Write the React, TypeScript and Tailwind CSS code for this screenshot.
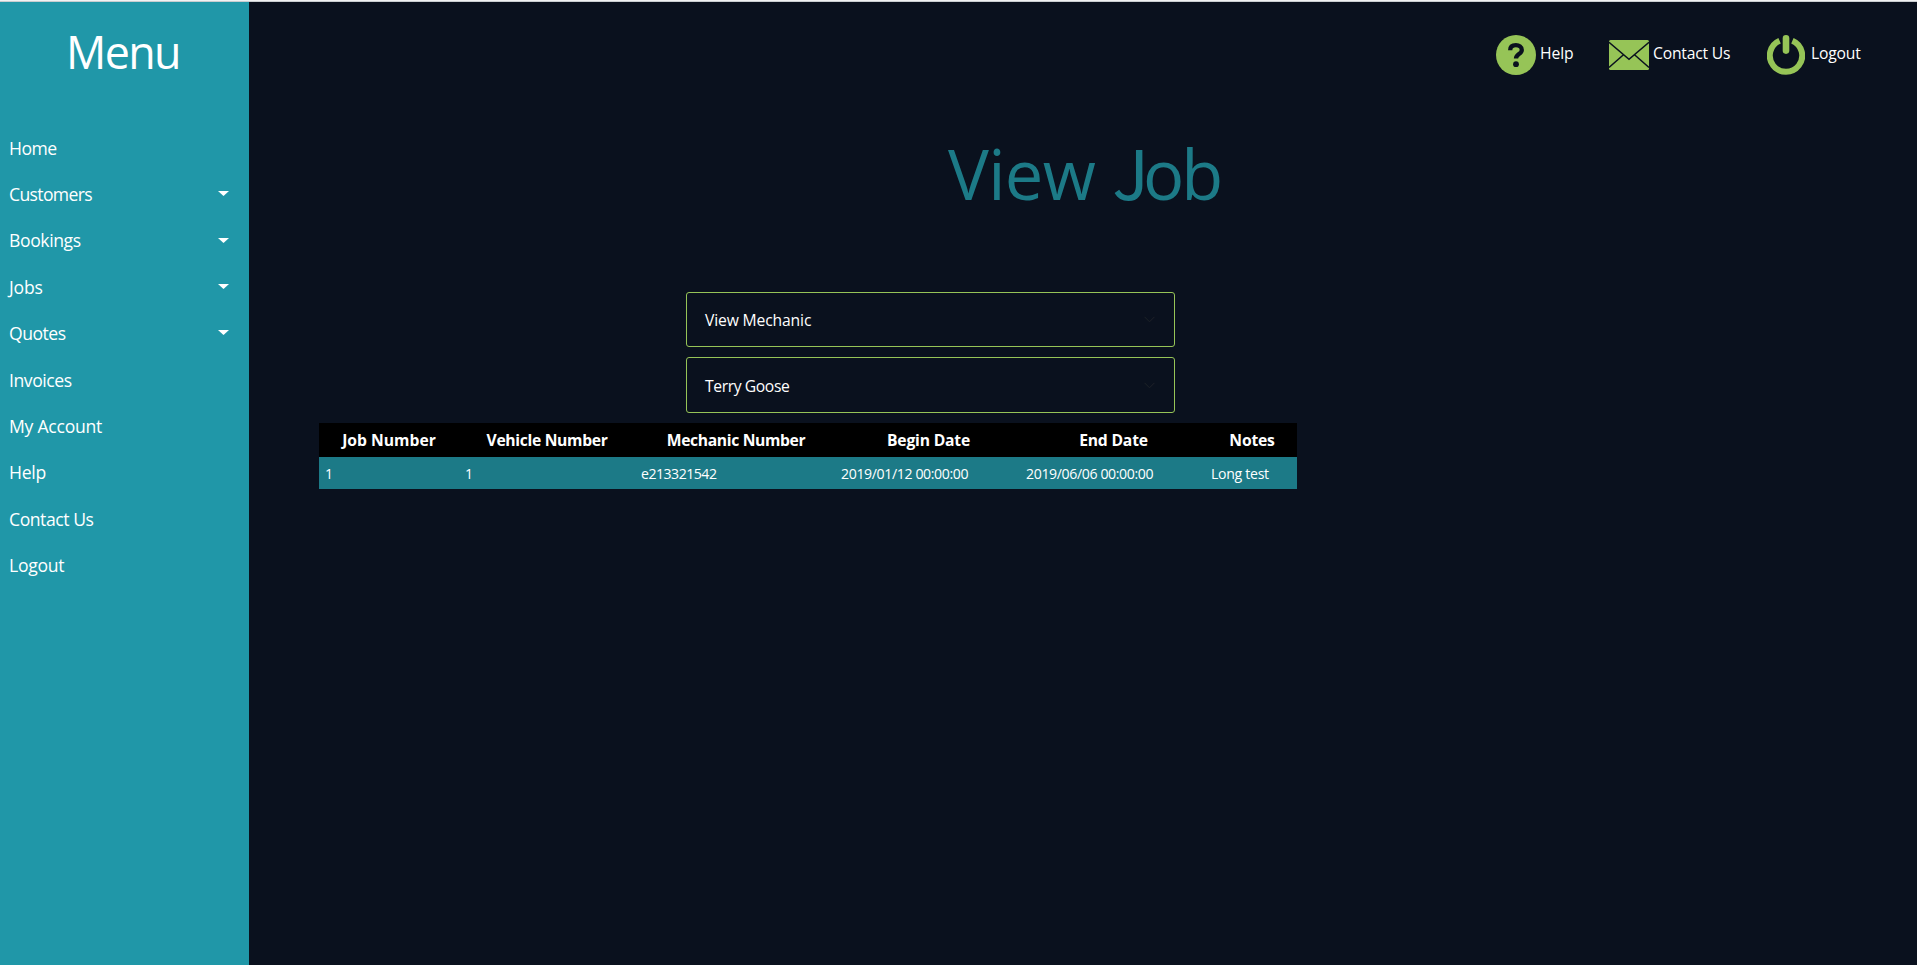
import type { ReactNode } from "react";

const menu: { label: string; tracking: string; dropdown?: boolean }[] = [
  { label: "Home", tracking: "tracking-[-0.5px]" },
  { label: "Customers", tracking: "tracking-[-0.65px]", dropdown: true },
  { label: "Bookings", tracking: "tracking-[-0.4px]", dropdown: true },
  { label: "Jobs", tracking: "tracking-[-0.2px]", dropdown: true },
  { label: "Quotes", tracking: "tracking-[-0.5px]", dropdown: true },
  { label: "Invoices", tracking: "tracking-[-0.45px]" },
  { label: "My Account", tracking: "tracking-[-0.25px]" },
  { label: "Help", tracking: "tracking-[-0.3px]" },
  { label: "Contact Us", tracking: "tracking-[-0.45px]" },
  { label: "Logout", tracking: "tracking-[-0.3px]" },
];

const columns = [
  { title: "Job Number", value: "1", width: "w-[140px]", head: "tracking-normal", cell: "tracking-normal" },
  { title: "Vehicle Number", value: "1", width: "w-[176px]", head: "tracking-[-0.33px]", cell: "tracking-normal" },
  { title: "Mechanic Number", value: "e213321542", width: "w-[200px]", head: "pl-[2px] tracking-[-0.36px]", cell: "tracking-[-0.5px]" },
  { title: "Begin Date", value: "2019/01/12 00:00:00", width: "w-[185px]", head: "pl-[2px] tracking-[-0.2px]", cell: "tracking-[-0.37px]" },
  { title: "End Date", value: "2019/06/06 00:00:00", width: "w-[185px]", head: "pl-[2px] tracking-[-0.2px]", cell: "tracking-[-0.37px]" },
  { title: "Notes", value: "Long test", width: "w-[92px]", head: "pl-[2px] tracking-[-0.2px]", cell: "tracking-[-0.3px]" },
];

function HelpIcon() {
  return (
    <svg width="40" height="40" viewBox="0 0 40 40">
      <circle cx="20" cy="20" r="20" fill="#96c457" />
      <path
        d="M14.2 15.2c0-3.500 2.400-5 5.700-5s5.900 1.600 5.900 4.700c0 4.300-5.800 4.100-5.800 8.600"
        fill="none"
        stroke="#0a111e"
        strokeWidth="4.300"
      />
      <circle cx="20" cy="29.200" r="2.900" fill="#0a111e" />
    </svg>
  );
}

function MailIcon() {
  return (
    <svg width="40" height="30" viewBox="0 0 40 30">
      <rect width="40" height="30" rx="1.500" fill="#96c457" />
      <path d="M0 2.200L20 19.200L40 2.200M0 27.500L14.200 15M40 27.500L25.800 15" fill="none" stroke="#0a111e" strokeWidth="1.500" />
    </svg>
  );
}

function PowerIcon() {
  return (
    <svg width="38" height="40" viewBox="0 0 38 40">
      <path d="M12.600 5.700a16.200 16.200 0 1 0 12.800 0" fill="none" stroke="#96c457" strokeWidth="6" />
      <path d="M19 3.400v12.200" stroke="#0a111e" strokeWidth="9.600" strokeLinecap="round" />
      <path d="M19 3.400v12.200" stroke="#96c457" strokeWidth="6.600" strokeLinecap="round" />
    </svg>
  );
}

function HeaderLink({ icon, label, className }: { icon: ReactNode; label: string; className: string }) {
  return (
    <a className={`flex h-10 items-center text-[15.7px] text-white ${className}`}>
      <span className="shrink-0">{icon}</span>
      <span className="pb-[3px] whitespace-nowrap">{label}</span>
    </a>
  );
}

function SelectBox({ label, className }: { label: string; className: string }) {
  return (
    <div
      className={`flex w-[489px] items-center justify-between rounded-[3px] border border-[#96c457] pl-[18px] pr-[19px] text-[15.7px] text-white ${className}`}
    >
      <span className="pt-[3px]">{label}</span>
      <svg width="11" height="7" viewBox="0 0 11 7">
        <path d="M.5.8l5 5 5-5" fill="none" stroke="#1e2228" />
      </svg>
    </div>
  );
}

export default function App() {
  return (
    <div className="flex h-[965px] w-full flex-col overflow-hidden bg-[#0a111e] font-['Open_Sans','Noto_Sans',sans-serif]">
      <div className="h-[2px] shrink-0 border-b border-[#c9cdd0] bg-[#f1f2f3]" />
      <div className="flex min-h-0 flex-1">
        <aside className="w-[249px] shrink-0 bg-[#2097a8] text-white">
          <h2 className="h-[122.6px] pt-[19px] pr-[3px] text-center text-[44.8px] leading-[61px] tracking-[-1.6px]">Menu</h2>
          <nav>
            {menu.map((item) => (
              <a key={item.label} className="flex h-[46.4px] items-center justify-between pl-[9px] pr-5 text-[17.6px]">
                <span className={item.tracking}>{item.label}</span>
                {item.dropdown && (
                  <svg className="mb-px" width="11" height="5" viewBox="0 0 11 5">
                    <path d="M0 0h11L5.500 5z" fill="#fff" />
                  </svg>
                )}
              </a>
            ))}
          </nav>
        </aside>
        <main className="flex-1">
          <header className="flex h-[100px] items-start justify-end pt-[33px]">
            <HeaderLink icon={<HelpIcon />} label="Help" className="w-[113px] gap-1 tracking-[-0.1px]" />
            <HeaderLink icon={<MailIcon />} label="Contact Us" className="w-[158px] gap-1 tracking-[-0.2px]" />
            <HeaderLink icon={<PowerIcon />} label="Logout" className="w-[150px] gap-1.5 tracking-[-0.2px]" />
          </header>
          <h1 className="h-[190px] pt-[21px] pl-[699px] text-[68.6px] leading-[94px] tracking-[-0.7px] whitespace-nowrap text-[#1c7a87]">
            View <span className="font-['Noto_Sans_CJK_SC',sans-serif] tracking-[-6px]">J</span>
            <span className="tracking-[-3px]">ob</span>
          </h1>
          <section className="pl-[437px]">
            <SelectBox label="View Mechanic" className="h-[55px] tracking-[-0.15px]" />
            <SelectBox label="Terry Goose" className="mt-2.5 h-14 tracking-[-0.4px]" />
          </section>
          <table className="mt-2.5 ml-[70px] w-[978px] table-fixed border-collapse text-white">
            <thead>
              <tr className="h-[34px] bg-black text-[15.7px]">
                {columns.map((c) => (
                  <th key={c.title} className={`pt-[2px] pr-0 pb-0 text-center font-bold whitespace-nowrap ${c.width} ${c.head}`}>
                    {c.title}
                  </th>
                ))}
              </tr>
            </thead>
            <tbody>
              <tr className="h-8 bg-[#1c7a87] text-[14.1px]">
                {columns.map((c) => (
                  <td key={c.title} className={`pt-[2px] pr-0 pb-0 pl-1.5 whitespace-nowrap ${c.cell}`}>
                    {c.value}
                  </td>
                ))}
              </tr>
            </tbody>
          </table>
        </main>
      </div>
    </div>
  );
}
